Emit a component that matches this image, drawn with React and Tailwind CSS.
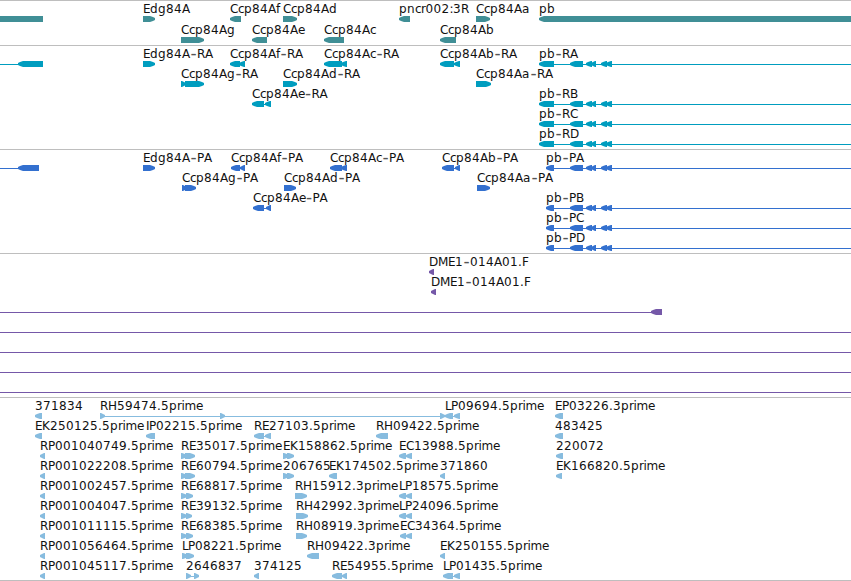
import React from "react";

const ADVANCE = {
  R: 8, P: 7, E: 7, ".": 4, r: 4.5, i: 3, m: 11.5, e: 6.5, C: 8, c: 6, "-": 7, f: 4,
  L: 6, H: 9, D: 9, M: 10, F: 7, I: 3, ":": 3.5,
};

function glyphPositions(text, start) {
  let x = start;
  return [...text].map((ch) => {
    const at = x;
    x += ADVANCE[ch] ?? 8;
    return at;
  });
}

const L = "L";
const R = "R";
// feature: [label, labelX, direction, exons, line]
const pbExons = [[570, 583], [586, 592], [591, 596], [601, 607], [606, 612]];
const pbR = (n) => [n, 539, L, [[539, 554], ...pbExons], [539, 851]];
const pbP = (n) => [n, 546, L, [[546, 554], ...pbExons], [546, 851]];
const rp = (n) => [n, 40, L, [[40, 45]]];

const tracks = [
  {
    id: "genes", fill: "fill-[#408f96]", height: "h-[45px]", row: "h-[21px]",
    rows: [
      [
        ["", 0, null, [[0, 43]]],
        ["Edg84A", 143, R, [[143, 155]]],
        ["Ccp84Af", 230, L, [[230, 241]]],
        ["Ccp84Ad", 283, R, [[283, 297]]],
        ["pncr002:3R", 399, L, [[399, 410]]],
        ["Ccp84Aa", 476, R, [[476, 490]]],
        ["pb", 539, L, [[539, 851]]],
      ],
      [
        ["Ccp84Ag", 181, R, [[181, 204]]],
        ["Ccp84Ae", 252, L, [[252, 267]]],
        ["Ccp84Ac", 324, L, [[324, 344]]],
        ["Ccp84Ab", 440, L, [[440, 456]]],
      ],
    ],
  },
  {
    id: "transcripts", fill: "fill-[#009dbf]", height: "h-[104px]", row: "h-5",
    rows: [
      [
        ["", 0, L, [[18, 43]], [0, 20]],
        ["Edg84A-RA", 143, R, [[143, 148], [144, 155]]],
        ["Ccp84Af-RA", 230, L, [[230, 240], [239, 245]], [230, 245]],
        ["Ccp84Ac-RA", 324, L, [[324, 342], [341, 347]]],
        ["Ccp84Ab-RA", 440, L, [[440, 454], [454, 460]], [440, 460]],
        pbR("pb-RA"),
      ],
      [
        ["Ccp84Ag-RA", 181, R, [[181, 186], [185, 204]], [181, 204]],
        ["Ccp84Ad-RA", 283, R, [[283, 288], [284, 297]]],
        ["Ccp84Aa-RA", 476, R, [[476, 481], [477, 491]]],
      ],
      [["Ccp84Ae-RA", 252, L, [[252, 264], [265, 271]], [252, 271]], pbR("pb-RB")],
      [pbR("pb-RC")],
      [pbR("pb-RD")],
    ],
  },
  {
    id: "proteins", fill: "fill-[#3370cf]", height: "h-[104px]", row: "h-5",
    rows: [
      [
        ["", 0, L, [[18, 39]], [0, 20]],
        ["Edg84A-PA", 143, R, [[143, 148], [144, 155]]],
        ["Ccp84Af-PA", 231, L, [[231, 240], [240, 245]], [231, 245]],
        ["Ccp84Ac-PA", 330, L, [[330, 342], [341, 347]]],
        ["Ccp84Ab-PA", 442, L, [[442, 454], [455, 460]], [442, 460]],
        pbP("pb-PA"),
      ],
      [
        ["Ccp84Ag-PA", 182, R, [[182, 187], [185, 196]], [182, 196]],
        ["Ccp84Ad-PA", 284, R, [[284, 296]]],
        ["Ccp84Aa-PA", 477, R, [[477, 490]]],
      ],
      [["Ccp84Ae-PA", 253, L, [[253, 264], [266, 271]], [253, 271]], pbP("pb-PB")],
      [pbP("pb-PC")],
      [pbP("pb-PD")],
    ],
  },
  {
    id: "clones", fill: "fill-[#7558a8]", height: "h-[144px]", row: "h-5",
    rows: [
      [["DME1-014A01.F", 429, L, [[429, 434]]]],
      [["DME1-014A01.F", 431, L, [[431, 436]]]],
      [["", 0, L, [[651, 662]], [0, 655]]],
      [["", 0, L, [], [0, 851]]],
      [["", 0, L, [], [0, 851]]],
      [["", 0, L, [], [0, 851]]],
      [["", 0, L, [], [0, 851]]],
    ],
  },
  {
    id: "ests", fill: "fill-[#87bcdf]", height: "h-[183px]", row: "h-5",
    rows: [
      [
        ["371834", 35, L, [[35, 42]]],
        ["RH59474.5prime", 100, R, [[100, 105], [220, 225], [440, 445]], [100, 445]],
        ["LP09694.5prime", 445, L, [[445, 453], [454, 460]], [445, 460]],
        ["EP03226.3prime", 555, L, [[555, 563]]],
      ],
      [
        ["EK250125.5prime", 35, L, [[35, 42]]],
        ["IP02215.5prime", 146, L, [[146, 155]]],
        ["RE27103.5prime", 254, L, [[254, 264], [265, 271]], [254, 271]],
        ["RH09422.5prime", 376, L, [[376, 388]]],
        ["483425", 555, L, [[555, 563]]],
      ],
      [
        rp("RP001040749.5prime"),
        ["RE35017.5prime", 181, R, [[181, 187], [185, 195]]],
        ["EK158862.5prime", 283, R, [[283, 289], [287, 294]]],
        ["EC13988.5prime", 399, L, [[399, 406], [406, 412]], [399, 412]],
        ["220072", 556, L, [[556, 563]]],
      ],
      [
        rp("RP001022208.5prime"),
        ["RE60794.5prime", 181, R, [[181, 187], [185, 195]]],
        ["206765", 283, R, [[283, 289], [287, 294]]],
        ["EK174502.5prime", 329, L, [[329, 337]]],
        ["371860", 440, L, [[440, 445]]],
        ["EK166820.5prime", 556, L, [[556, 562]]],
      ],
      [
        rp("RP001002457.5prime"),
        ["RE68817.5prime", 181, R, [[181, 187], [186, 193]]],
        ["RH15912.3prime", 295, R, [[295, 307]]],
        ["LP18575.5prime", 399, L, [[399, 406], [406, 412]], [399, 412]],
      ],
      [
        rp("RP001004047.5prime"),
        ["RE39132.5prime", 181, R, [[181, 187], [186, 192]]],
        ["RH42992.3prime", 296, R, [[296, 308]]],
        ["LP24096.5prime", 399, L, [[399, 406], [406, 412]], [399, 412]],
      ],
      [
        rp("RP001011115.5prime"),
        ["RE68385.5prime", 181, R, [[181, 187], [186, 193]]],
        ["RH08919.3prime", 296, R, [[296, 307]]],
        ["EC34364.5prime", 400, L, [[400, 406], [406, 412]], [400, 412]],
      ],
      [
        rp("RP001056464.5prime"),
        ["LP08221.5prime", 182, R, [[182, 188], [186, 194]]],
        ["RH09422.3prime", 307, L, [[307, 319]]],
        ["EK250155.5prime", 440, L, [[440, 445]]],
      ],
      [
        rp("RP001045117.5prime"),
        ["2646837", 186, R, [[186, 191], [194, 199]], [186, 199]],
        ["374125", 254, L, [[254, 259]]],
        ["RE54955.5prime", 332, L, [[332, 342], [342, 347]], [332, 347]],
        ["LP01435.5prime", 443, L, [[443, 453], [454, 460]], [443, 460]],
      ],
    ],
  },
];

// Blunt-nosed box: the tip is two pixels tall and flares to the full six
function exonPath(dir, a, b) {
  if (!dir) return `M${a} 13H${b}V19H${a}Z`;
  const head = Math.min(5, b - a - 1);
  const [tip, tail, s] = dir === L ? [a, b, 1] : [b, a, -1];
  const neck = tip + s * head;
  return `M${tip} 15L${tip + s * 2} 14L${neck} 13H${tail}V19H${neck}L${tip + s * 2} 18L${tip} 17Z`;
}

function Label({ text, x }) {
  const xs = glyphPositions(text, x);
  const dash = text.indexOf("-");
  const cls = "fill-[#111] text-[12px] font-['DejaVu_Sans',sans-serif]";
  if (dash < 0) {
    return <text className={cls} x={xs.join(" ")} y="10">{text}</text>;
  }
  return (
    <text className={cls} y="10">
      <tspan x={xs.slice(0, dash).join(" ")}>{text.slice(0, dash)}</tspan>
      <tspan className="fill-[#555] text-[17px]" x={xs[dash] + 0.5} y="11">-</tspan>
      <tspan x={xs.slice(dash + 1).join(" ")} y="10">{text.slice(dash + 1)}</tspan>
    </text>
  );
}

function Feature({ data, fill }) {
  const [label, x, dir, exons, line] = data;
  return (
    <g>
      {line && (
        <rect className={fill} x={line[0]} y="16" width={line[1] - line[0]} height="1" />
      )}
      {exons.map(([a, b]) => (
        <path key={a} className={fill} d={exonPath(dir, a, b)} />
      ))}
      {label && <Label text={label} x={x} />}
    </g>
  );
}

export default function App() {
  return (
    <main className="flex h-[581px] w-[851px] flex-col overflow-hidden border-b border-[#bebebe] bg-white">
      {tracks.map((track) => (
        <section
          key={track.id}
          className={`${track.height} flex shrink-0 flex-col border-t border-[#bebebe] pt-0.5`}
        >
          {track.rows.map((row, i) => (
            <svg
              key={i}
              className={`block w-full shrink-0 overflow-visible ${track.row}`}
            >
              {row.map((feature, j) => (
                <Feature key={j} data={feature} fill={track.fill} />
              ))}
            </svg>
          ))}
        </section>
      ))}
    </main>
  );
}
